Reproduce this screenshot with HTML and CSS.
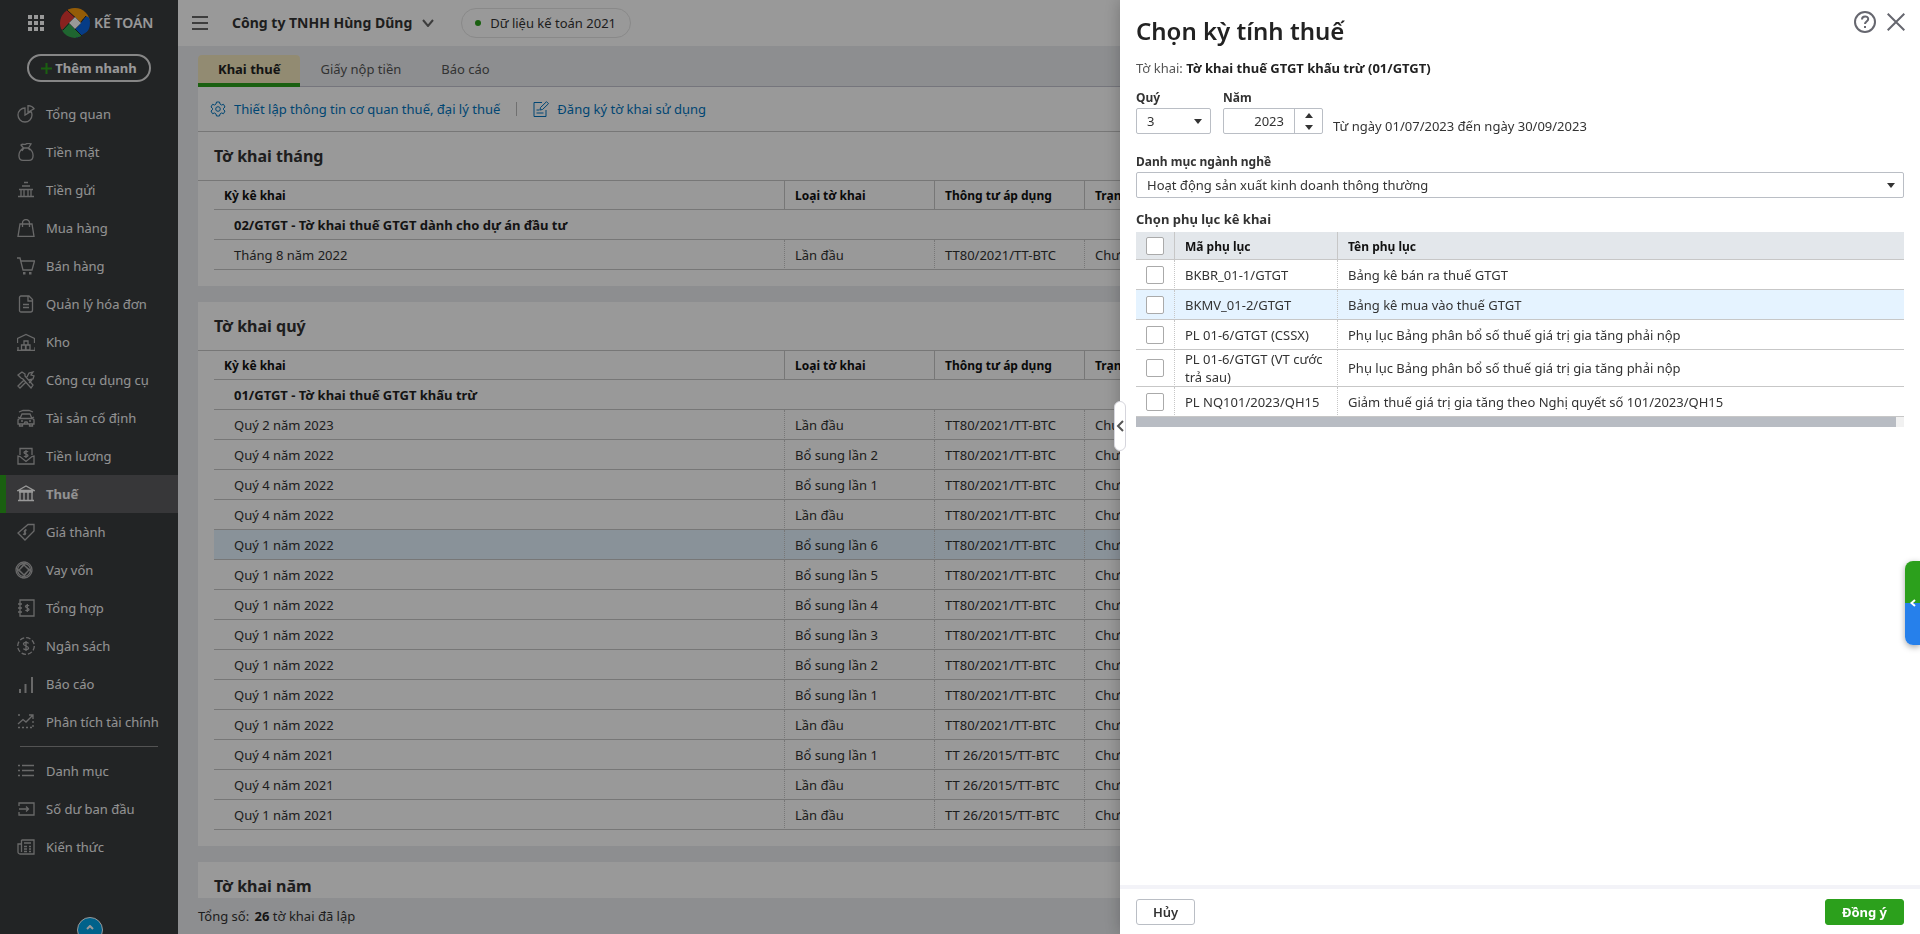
FILE: index.html
```html
<!DOCTYPE html>
<html lang="vi">
<head>
<meta charset="utf-8">
<title>Kế toán - Chọn kỳ tính thuế</title>
<link rel="stylesheet" href="styles.css">
</head>
<body>
<div class="app">
  <aside class="sidebar">
    <div class="brand">
      <svg class="apps" width="16" height="16" viewBox="0 0 16 16"><path d="M0 0h4v4H0zM6 0h4v4H6zM12 0h4v4h-4zM0 6h4v4H0zM6 6h4v4H6zM12 6h4v4h-4zM0 12h4v4H0zM6 12h4v4H6zM12 12h4v4h-4z"/></svg>
      <svg class="logo" width="30" height="30" viewBox="0 0 30 30">
        <defs><clipPath id="disc"><circle cx="15" cy="15" r="15"/></clipPath></defs>
        <g clip-path="url(#disc)">
          <path fill="#e53935" d="M0 0h8l7 9-6 6-5 7-4-1z"/>
          <path fill="#f79a0c" d="M8 0h22v12l-7-1-2 4-6-6-8-7z"/>
          <path fill="#0b64e0" d="M26 8l4 2v12l-13 8-2-9 6-6z"/>
          <path fill="#35a850" d="M3 21l6-6 6 6 7 7-7 2H0z"/>
          <path stroke="#25282b" stroke-width="1" fill="none" d="M7 2l14 13M26 8L15 21M23 29L9 15M3 22L15 9"/>
        </g>
        <path fill="#fff" d="M15 9l6 6-6 6-6-6z"/>
      </svg>
      <span class="brand-name">KẾ TOÁN</span>
    </div>
    <button class="quick-add" type="button">
      <svg width="11" height="11" viewBox="0 0 11 11"><path d="M5.500 0v11M0 5.500h11"/></svg>Thêm nhanh
    </button>
    <nav class="menu">
      <a href="#"><svg viewBox="0 0 18 18"><path d="M8 3a7 7 0 1 0 7 7c0-2-.6-3-1-3.500L8 10zM11 .7v6.500l6-3.500C16 2 13.500.8 11 .7z"/></svg>Tổng quan</a>
      <a href="#"><svg viewBox="0 0 18 18"><path d="M6.500 5C0 9 1 17.300 6 17.300h6c5 0 6-8.300-.5-12.300zM6.500 5L4 2c2-2 3 .5 5-1s3-.5 5 0l-2.500 4M5 8l2-3h4l2 2"/></svg>Tiền mặt</a>
      <a href="#"><svg viewBox="0 0 18 18"><path d="M7 1.500h4M5 5h8M2 8.500h14M4 9v6M7 9v6M11 9v6M14 9v6M1 15.500h16"/></svg>Tiền gửi</a>
      <a href="#"><svg viewBox="0 0 18 18"><path d="M3 5h12l2 12.300H1zM5.500 8V4a3.500 3.500 0 0 1 7 0v4"/></svg>Mua hàng</a>
      <a href="#"><svg viewBox="0 0 18 18"><path d="M0 1h3l3 12h9l2.500-9H4"/><path class="dot" d="M6 15h2.500v2.500H6zM12 15h2.500v2.500H12z"/></svg>Bán hàng</a>
      <a href="#"><svg viewBox="0 0 18 18"><path d="M4 1h8l3.500 3.500V15a2 2 0 0 1-2 2H4a1.500 1.500 0 0 1-1.500-1.500v-13A1.500 1.500 0 0 1 4 1zM11 1v5h4.500M6 9.500h6M6 12.500h6"/></svg>Quản lý hóa đơn</a>
      <a href="#"><svg viewBox="0 0 18 18"><path d="M.5 10V5.500L9 1.500l8.500 4V10M0 17.300h18v-3M4.500 12h4v5h-4zM9 12h4v5H9zM7 8h4v4H7zM1 17v-3"/></svg>Kho</a>
      <a href="#"><svg viewBox="0 0 18 18"><path d="M1 4l4-3 3 2v2l8 9-2 3-8-9-2-1-1-1zM10 6l2-4 4-1-2 3 3 1-1 3-4 1M7 9l-6 6 2 2 6-6M12 12l3-3"/></svg>Công cụ dụng cụ</a>
      <a href="#"><svg viewBox="0 0 18 18"><path d="M2 3l4-1.500h6L16 3M5 5h8l2 4.500H3zM3 9.500a2 2 0 0 0-2 2V15h16v-3.500a2 2 0 0 0-2-2M2.500 15v2h3v-2M12.500 15v2h3v-2M4 12h2M12 12h2M7 15l1-2h2l1 2M1 8l2 1M17 8l-2 1"/></svg>Tài sản cố định</a>
      <a href="#"><svg viewBox="0 0 18 18"><path d="M3 8V1.500h12V8M1 9v8h16V9l-2 .5-6 5-6-5zM11 5c-.5-1-4-1-4 .5S11 7 11 8.500s-3.500 1.500-4 .5M9 3v8"/></svg>Tiền lương</a>
      <a href="#" class="active"><svg viewBox="0 0 18 18"><path d="M1 5.500L9 1l8 4.500zM3 6v9M7 6v9M11 6v9M15 6v9M1 15.500h16M2 7h14"/></svg>Thuế</a>
      <a href="#"><svg viewBox="0 0 18 18"><path d="M11 1.500h6V8l-9 9-7-7zM15 4h0M9.500 7.500c-2-1-3 1-1.500 2s0 3-2 1.500M9 6l-2 6"/></svg>Giá thành</a>
      <a href="#" class="wide"><svg viewBox="0 0 18 18"><circle cx="9" cy="9" r="8"/><path d="M9 4l5 5-5 5-5-5zM11 1L5 8M17 11l-7-6M7 17l6-7M1 7l7 6"/><circle cx="9" cy="9" r="6.500"/></svg>Vay vốn</a>
      <a href="#"><svg viewBox="0 0 18 18"><path d="M3 1h14v16H3zM1 5h4M1 9h4M1 13h4M12 7c-.5-1-3.500-1-3.500.5S12 9 12 10.500 9 12 8.500 11M10.300 5v8"/></svg>Tổng hợp</a>
      <a href="#"><svg viewBox="0 0 18 18"><circle cx="9" cy="9" r="8.300" stroke-dasharray="4.500 2"/><path d="M11.500 6.500c-.5-1.500-5-1.500-5 .5s5 2 5 4-4.500 2-5 .5M9 4v10"/></svg>Ngân sách</a>
      <a href="#"><svg viewBox="0 0 18 18"><path class="bars" d="M3 14v4M8.500 9v9M15 2v16"/></svg>Báo cáo</a>
      <a href="#"><svg viewBox="0 0 18 18"><path d="M1 11l5-4.500 3 2.500 7-7M12 2h4v4"/><path stroke-dasharray="2 2" d="M1 2h4M1 14.500h16M16 8v6"/></svg>Phân tích tài chính</a>
      <hr>
      <a href="#"><svg viewBox="0 0 18 18"><path d="M5 3.500h12M5 8.500h12M5 13.500h12M1 3.500h2M1 8.500h2M1 13.500h2"/></svg>Danh mục</a>
      <a href="#"><svg viewBox="0 0 18 18"><path d="M2 6V3h15v12H2v-3M2 9h9M9 6.500L11.500 9 9 11.500"/></svg>Số dư ban đầu</a>
      <a href="#"><svg viewBox="0 0 18 18"><path d="M4.500 2H17v14H3a2 2 0 0 1-2-2V6h3M4.500 2v12M7 5h7M7 8.500h3M12 8.500h2M7 11h3M12 11h2M7 13.500h3M12 13.500h2"/></svg>Kiến thức</a>
    </nav>
    <button class="scroll-up" type="button" aria-label="Lên đầu"><svg width="8" height="5" viewBox="0 0 8 5"><path d="M1 4l3-3 3 3"/></svg></button>
  </aside>

  <div class="main">
    <header class="topbar">
      <svg class="burger" width="16" height="14" viewBox="0 0 16 14"><path d="M0 1h16M0 7h16M0 13h16"/></svg>
      <span class="company">Công ty TNHH Hùng Dũng</span>
      <svg class="chev" width="12" height="8" viewBox="0 0 12 8"><path d="M1 1l5 6 5-6"/></svg>
      <span class="dataset"><i></i>Dữ liệu kế toán 2021</span>
    </header>
    <nav class="tabs">
      <a href="#" class="current">Khai thuế</a><a href="#">Giấy nộp tiền</a><a href="#">Báo cáo</a>
    </nav>
    <div class="content">
      <div class="toolbar">
        <a href="#"><svg width="16" height="16" viewBox="0 0 16 16"><path d="M6.500 1h3l.5 2 1.500 1 2-.7 1.500 2.700-1.500 1.300v1.400L15 10l-1.500 2.700-2-.7-1.500 1-.5 2h-3L6 13l-1.500-1-2 .7L1 10l1.500-1.300V7.300L1 6l1.500-2.700 2 .7L6 3z"/><circle cx="8" cy="8" r="2.300"/></svg>Thiết lập thông tin cơ quan thuế, đại lý thuế</a>
        <span class="sep"></span>
        <a href="#"><svg width="16" height="16" viewBox="0 0 16 16"><path d="M9 1.500H1v14h12V9M7 9l.5-2.500L13.500.7l2 2L9.500 8.500zM3.500 9h3M3.500 12h7"/></svg>Đăng ký tờ khai sử dụng</a>
      </div>
      <section class="card">
        <h2>Tờ khai tháng</h2>
        <div class="grid">
        <table>
          <thead><tr><th class="c1">Kỳ kê khai</th><th class="c2">Loại tờ khai</th><th class="c2">Thông tư áp dụng</th><th>Trạng thái</th></tr></thead>
          <tbody>
            <tr class="group"><td colspan="4">02/GTGT - Tờ khai thuế GTGT dành cho dự án đầu tư</td></tr>
            <tr><td>Tháng 8 năm 2022</td><td>Lần đầu</td><td>TT80/2021/TT-BTC</td><td>Chưa nộp</td></tr>
          </tbody>
        </table>
        </div>
      </section>
      <section class="card">
        <h2>Tờ khai quý</h2>
        <div class="grid">
        <table>
          <thead><tr><th class="c1">Kỳ kê khai</th><th class="c2">Loại tờ khai</th><th class="c2">Thông tư áp dụng</th><th>Trạng thái</th></tr></thead>
          <tbody>
            <tr class="group"><td colspan="4">01/GTGT - Tờ khai thuế GTGT khấu trừ</td></tr>
            <tr><td>Quý 2 năm 2023</td><td>Lần đầu</td><td>TT80/2021/TT-BTC</td><td>Chưa nộp</td></tr>
            <tr><td>Quý 4 năm 2022</td><td>Bổ sung lần 2</td><td>TT80/2021/TT-BTC</td><td>Chưa nộp</td></tr>
            <tr><td>Quý 4 năm 2022</td><td>Bổ sung lần 1</td><td>TT80/2021/TT-BTC</td><td>Chưa nộp</td></tr>
            <tr><td>Quý 4 năm 2022</td><td>Lần đầu</td><td>TT80/2021/TT-BTC</td><td>Chưa nộp</td></tr>
            <tr class="picked"><td>Quý 1 năm 2022</td><td>Bổ sung lần 6</td><td>TT80/2021/TT-BTC</td><td>Chưa nộp</td></tr>
            <tr><td>Quý 1 năm 2022</td><td>Bổ sung lần 5</td><td>TT80/2021/TT-BTC</td><td>Chưa nộp</td></tr>
            <tr><td>Quý 1 năm 2022</td><td>Bổ sung lần 4</td><td>TT80/2021/TT-BTC</td><td>Chưa nộp</td></tr>
            <tr><td>Quý 1 năm 2022</td><td>Bổ sung lần 3</td><td>TT80/2021/TT-BTC</td><td>Chưa nộp</td></tr>
            <tr><td>Quý 1 năm 2022</td><td>Bổ sung lần 2</td><td>TT80/2021/TT-BTC</td><td>Chưa nộp</td></tr>
            <tr><td>Quý 1 năm 2022</td><td>Bổ sung lần 1</td><td>TT80/2021/TT-BTC</td><td>Chưa nộp</td></tr>
            <tr><td>Quý 1 năm 2022</td><td>Lần đầu</td><td>TT80/2021/TT-BTC</td><td>Chưa nộp</td></tr>
            <tr><td>Quý 4 năm 2021</td><td>Bổ sung lần 1</td><td>TT 26/2015/TT-BTC</td><td>Chưa nộp</td></tr>
            <tr><td>Quý 4 năm 2021</td><td>Lần đầu</td><td>TT 26/2015/TT-BTC</td><td>Chưa nộp</td></tr>
            <tr><td>Quý 1 năm 2021</td><td>Lần đầu</td><td>TT 26/2015/TT-BTC</td><td>Chưa nộp</td></tr>
          </tbody>
        </table>
        </div>
      </section>
      <section class="card"><h2>Tờ khai năm</h2></section>
    </div>
    <footer class="totals">Tổng số: <b>26</b> tờ khai đã lập</footer>
  </div>
</div>

<div class="overlay"></div>

<form class="panel">
  <button class="collapse" type="button" aria-label="Mở rộng"><svg width="8" height="12" viewBox="0 0 8 12"><path d="M7 1L2 6l5 5"/></svg></button>
  <div class="panel-body">
    <div class="panel-head">
      <h1>Chọn kỳ tính thuế</h1>
      <div class="head-actions">
        <button type="button" aria-label="Trợ giúp"><svg width="22" height="22" viewBox="0 0 22 22"><circle cx="11" cy="11" r="10"/><path d="M8 8.500c0-4 6.200-4 6.200-.5 0 2.500-3.200 2.500-3.200 5M11 15v2"/></svg></button>
        <button type="button" aria-label="Đóng"><svg width="18" height="18" viewBox="0 0 18 18"><path d="M.7.7l16.600 16.600M17.300.7L.7 17.300"/></svg></button>
      </div>
    </div>
    <p class="form-name">Tờ khai: <b>Tờ khai thuế GTGT khấu trừ (01/GTGT)</b></p>
    <div class="period">
      <div class="field quarter">
        <label for="quarter">Quý</label>
        <div class="select"><select id="quarter"><option>3</option></select><svg width="8" height="5" viewBox="0 0 8 5"><path d="M0 0h8L4 5z"/></svg></div>
      </div>
      <div class="field year">
        <label for="year">Năm</label>
        <div class="spinner"><input id="year" type="text" value="2023"><span class="steps"><button type="button" aria-label="Tăng"><svg width="8" height="5" viewBox="0 0 8 5"><path d="M0 5h8L4 0z"/></svg></button><button type="button" aria-label="Giảm"><svg width="8" height="5" viewBox="0 0 8 5"><path d="M0 0h8L4 5z"/></svg></button></span></div>
      </div>
      <p class="range">Từ ngày 01/07/2023 đến ngày 30/09/2023</p>
    </div>
    <div class="field trade">
      <label for="trade">Danh mục ngành nghề</label>
      <div class="select"><select id="trade"><option>Hoạt động sản xuất kinh doanh thông thường</option></select><svg width="8" height="5" viewBox="0 0 8 5"><path d="M0 0h8L4 5z"/></svg></div>
    </div>
    <h3>Chọn phụ lục kê khai</h3>
    <table class="annex">
      <thead><tr><th class="tick"><input type="checkbox" aria-label="Chọn tất cả"></th><th class="code">Mã phụ lục</th><th>Tên phụ lục</th></tr></thead>
      <tbody>
        <tr><td class="tick"><input type="checkbox" id="a1"></td><td><label for="a1">BKBR_01-1/GTGT</label></td><td>Bảng kê bán ra thuế GTGT</td></tr>
        <tr class="picked"><td class="tick"><input type="checkbox" id="a2"></td><td><label for="a2">BKMV_01-2/GTGT</label></td><td>Bảng kê mua vào thuế GTGT</td></tr>
        <tr><td class="tick"><input type="checkbox" id="a3"></td><td><label for="a3">PL 01-6/GTGT (CSSX)</label></td><td>Phụ lục Bảng phân bổ số thuế giá trị gia tăng phải nộp</td></tr>
        <tr><td class="tick"><input type="checkbox" id="a4"></td><td><label for="a4">PL 01-6/GTGT (VT cước trả sau)</label></td><td>Phụ lục Bảng phân bổ số thuế giá trị gia tăng phải nộp</td></tr>
        <tr><td class="tick"><input type="checkbox" id="a5"></td><td><label for="a5">PL NQ101/2023/QH15</label></td><td>Giảm thuế giá trị gia tăng theo Nghị quyết số 101/2023/QH15</td></tr>
      </tbody>
    </table>
    <div class="hscroll"><div></div></div>
  </div>
  <div class="panel-foot">
    <button class="btn" type="button">Hủy</button>
    <button class="btn primary" type="submit">Đồng ý</button>
  </div>
</form>

<button class="dock" type="button" aria-label="Hỗ trợ"><svg width="6" height="8" viewBox="0 0 6 8"><path d="M5 1L1.500 4 5 7"/></svg></button>
</body>
</html>
```
FILE: styles.css
```css
* { box-sizing: border-box; }
html, body { height: 100%; }
body {
  margin: 0;
  overflow: hidden;
  font: 13px/18px "Noto Sans", sans-serif;
  color: #333;
}
h1, h2, h3, p { margin: 0; }
a { color: inherit; text-decoration: none; }
button, input, select { font: inherit; color: inherit; margin: 0; }
button { padding: 0; border: 0; background: none; }
svg { flex: none; fill: none; stroke: currentColor; }
b { font-weight: 700; color: #222; }

.app { display: flex; height: 100vh; background: #ebedf0; }

/* Sidebar */
.sidebar {
  position: relative;
  flex: none;
  width: 178px;
  overflow: hidden;
  background: #393c3f;
  color: #fff;
}
.brand { display: flex; align-items: center; height: 46px; padding-left: 28px; }
.brand .apps { fill: #fff; stroke: none; }
.brand .logo { margin: 0 4px 0 16px; stroke: none; }
.brand-name { font-size: 14px; font-weight: 600; }
.quick-add {
  display: flex;
  align-items: center;
  justify-content: center;
  gap: 3px;
  width: 124px;
  height: 28px;
  margin: 8px 0 13px 27px;
  border: 2px solid #e0e0e0;
  border-radius: 14px;
  font-weight: 700;
}
.quick-add svg { stroke: #2ca01c; stroke-width: 2; }
.menu a {
  display: flex;
  align-items: center;
  height: 38px;
  padding-left: 17px;
  gap: 11px;
  white-space: nowrap;
  color: #f4f4f4;
}
.menu svg { width: 18px; height: 18px; stroke: #b0b0b0; stroke-width: 1.3; }
.menu .dot { fill: #b0b0b0; stroke: none; }
.menu .bars { stroke-width: 2; }
.menu .wide { padding-left: 15px; gap: 13px; }
.menu .active {
  padding-left: 11px;
  border-left: 6px solid #2ca01c;
  background: #5d5d60;
  font-weight: 700;
}
.menu .active svg { stroke: #fff; }
.menu hr { height: 1px; margin: 5px 20px; border: 0; background: #8a8a8a; }
.scroll-up {
  position: absolute;
  left: 77px;
  bottom: -9px;
  width: 26px;
  height: 26px;
  padding-bottom: 6px;
  border: 1px solid #fff;
  border-radius: 13px;
  background: #00a3e8;
  line-height: 0;
}
.scroll-up svg { stroke-width: 2; }

/* Main area */
.main { display: flex; flex-direction: column; flex: 1; min-width: 0; }
.topbar {
  display: flex;
  flex: none;
  align-items: center;
  height: 46px;
  padding-left: 14px;
  background: #fff;
}
.burger { stroke: #666; stroke-width: 2; }
.company { margin: 0 10px 0 24px; font-size: 14px; font-weight: 700; color: #333; }
.chev { stroke: #666; stroke-width: 2; }
.dataset {
  display: flex;
  align-items: center;
  gap: 9px;
  height: 30px;
  margin-left: 27px;
  padding: 0 14px 0 13px;
  border: 1px solid #e5e5e5;
  border-radius: 15px;
}
.dataset i { width: 6px; height: 6px; border-radius: 3px; background: #2ca01c; }
.tabs {
  display: flex;
  flex: none;
  height: 41px;
  margin: 0 20px;
  padding-top: 9px;
  border-bottom: 1px solid #c3c4cf;
}
.tabs a { height: 32px; padding: 0 20px; line-height: 29px; color: #555; }
.tabs .current {
  border-bottom: 4px solid #2ca01c;
  border-radius: 4px 4px 0 0;
  background: #f4e8bf;
  font-weight: 700;
  color: #222;
}
.content { flex: 1; min-height: 0; margin: 0 20px; overflow: hidden; }
.toolbar {
  display: flex;
  align-items: center;
  height: 45px;
  padding-left: 12px;
  border-bottom: 1px solid #c7c7c7;
  background: #fff;
  color: #0075c0;
}
.toolbar a { display: flex; align-items: center; gap: 8px; }
.sep { width: 1px; height: 14px; margin: 0 16px; background: #bbb; }
.card { margin-bottom: 16px; padding-bottom: 16px; background: #fff; }
.card h2 {
  height: 49px;
  padding-left: 16px;
  border-bottom: 1px solid #c7c7c7;
  font-size: 16px;
  font-weight: 700;
  line-height: 49px;
  color: #333;
}
.grid { padding: 0 16px; }
table { width: 100%; border-collapse: separate; border-spacing: 0; table-layout: fixed; text-align: left; }
th, td { padding: 0 10px; border-bottom: 1px solid #c7c7c7; }
th { padding-top: 2px; font-size: 12px; font-weight: 700; color: #111; border-left: 1px solid #c7c7c7; }
td { height: 30px; border-left: 1px dotted #c7c7c7; }
th:first-child, td:first-child { border-left: 0; }
.grid th { height: 29px; }
.grid td:first-child { padding-left: 20px; }
.grid .c1 { width: 570px; }
.grid .c2 { width: 150px; }
.grid .group td { font-weight: 700; color: #222; }
.picked td { background: #e5f3ff; }
.totals { flex: none; height: 36px; padding-left: 20px; line-height: 37px; }
.totals b { margin-left: 2px; }

.overlay { position: fixed; inset: 0; background: rgba(0, 0, 0, .4); }

/* Slide-over form */
.panel {
  position: fixed;
  top: 0;
  right: 0;
  bottom: 0;
  display: flex;
  flex-direction: column;
  width: 800px;
  background: #fff;
  box-shadow: 0 0 16px rgba(0, 0, 0, .25);
}
.panel-body { flex: 1; padding: 11px 16px 0; }
.panel-head { display: flex; justify-content: space-between; }
.panel h1 { font-size: 24px; font-weight: 600; line-height: 40px; color: #222; }
.head-actions { display: flex; align-items: flex-start; gap: 11px; margin-right: -1px; color: #66676f; }
.head-actions button { display: grid; place-items: center; height: 22px; }
.head-actions svg { stroke-width: 2; }
.form-name { margin-top: 8px; color: #555; }
.period { display: flex; margin-top: 12px; }
.field label { display: block; height: 19px; font-size: 12px; font-weight: 700; color: #333; }
.quarter { width: 75px; margin-right: 12px; }
.year { width: 100px; margin-right: 10px; }
.select { position: relative; height: 26px; }
.select select {
  width: 100%;
  height: 26px;
  padding: 0 28px 0 10px;
  border: 1px solid #babec5;
  border-radius: 2px;
  background: #fff;
  appearance: none;
}
.select svg { position: absolute; top: 11px; right: 9px; fill: #333; stroke: none; }
.spinner { display: flex; height: 26px; border: 1px solid #babec5; border-radius: 2px; }
.spinner input {
  flex: 1;
  min-width: 0;
  padding: 0 10px;
  border: 0;
  outline: 0;
  background: none;
  text-align: right;
}
.steps { display: grid; grid-template-rows: 12px 12px; width: 28px; border-left: 1px solid #babec5; }
.steps button { display: grid; place-items: center; }
.steps svg { fill: #333; stroke: none; }
.range { margin-top: 28px; }
.trade { margin-top: 18px; }
.panel h3 { margin-top: 12px; font-size: 13px; font-weight: 700; line-height: 18px; color: #333; }
.annex { margin-top: 4px; }
.annex th { height: 28px; background: #e3e7eb; }
.annex .tick { width: 38px; padding: 0; text-align: center; line-height: 0; }
.tick input {
  width: 18px;
  height: 18px;
  border: 1px solid #aaa;
  border-radius: 2px;
  background: #fff;
  vertical-align: middle;
  appearance: none;
}
.annex .code { width: 163px; }
.hscroll { height: 10px; background: #f1f1f1; }
.hscroll div { width: 99%; height: 10px; background: #b8bcc3; }
.panel-foot {
  display: flex;
  justify-content: space-between;
  height: 49px;
  padding: 10px 16px 0;
  border-top: 4px solid #f3f3f8;
}
.btn {
  height: 26px;
  padding: 0 16px;
  border: 1px solid #babec5;
  border-radius: 3px;
  font-weight: 600;
}
.btn.primary { border-color: #2ca01c; background: #2ca01c; color: #fff; font-weight: 700; }
.collapse {
  position: absolute;
  top: 401px;
  left: -6px;
  display: grid;
  place-items: center;
  width: 12px;
  height: 50px;
  border: 1px solid #d5d5dc;
  border-radius: 6px;
  background: #fff;
  color: #555;
}
.collapse svg { stroke-width: 2; }
.dock {
  position: fixed;
  top: 561px;
  right: 0;
  display: grid;
  place-items: center;
  width: 15px;
  height: 84px;
  border-radius: 8px 0 0 8px;
  background: linear-gradient(#2ca01c 50%, #2680eb 50%);
  box-shadow: 0 2px 6px rgba(0, 0, 0, .35);
  color: #fff;
}
.dock svg { stroke-width: 2; }
```
